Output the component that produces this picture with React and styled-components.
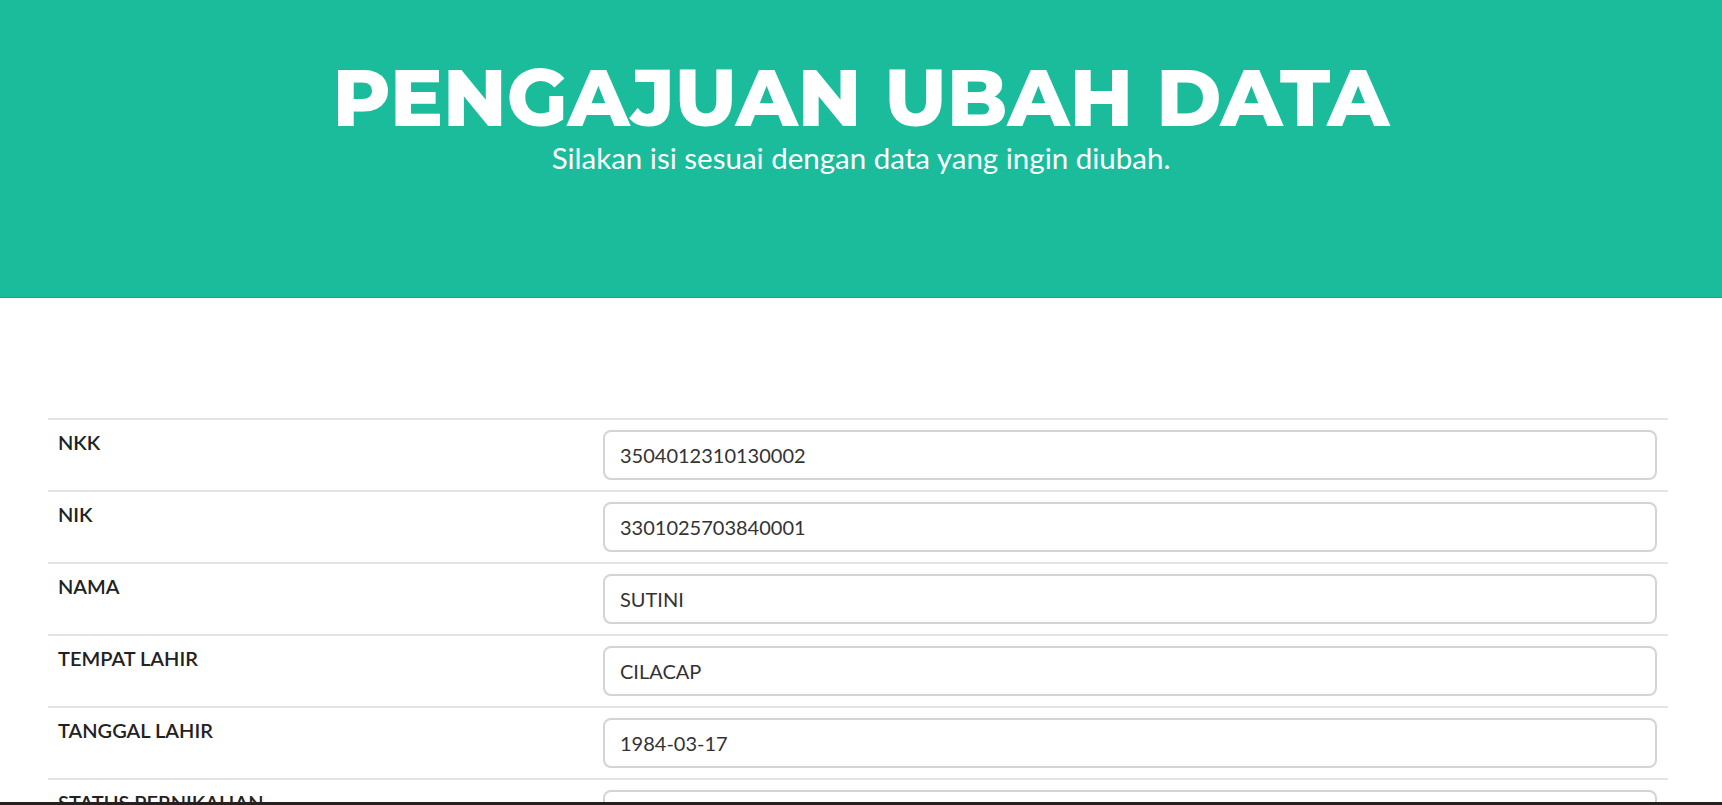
import React, { useState } from 'react';
import styled, { createGlobalStyle } from 'styled-components';

const GlobalStyle = createGlobalStyle`
  html, body {
    margin: 0;
    padding: 0;
    background: #fff;
    font-family: Lato, "Open Sans", sans-serif;
    color: #222;
  }
  * {
    box-sizing: border-box;
  }
`;

const Header = styled.header`
  background: #1abc9c;
  height: 298px;
  padding-top: 58px;
  text-align: center;
  color: #fff;
  border-bottom: 1px solid #18a98c;
`;

const Title = styled.h1`
  margin: 0;
  font-family: Montserrat, Inter, "Open Sans", sans-serif;
  font-weight: 800;
  font-size: 79px;
  line-height: 81px;
  text-transform: uppercase;
`;

const Subtitle = styled.p`
  margin: 0;
  font-family: Lato, sans-serif;
  font-size: 29.5px;
  line-height: 1.3;
`;

const Section = styled.section`
  padding: 120px 54px 0 48px;
`;

const Table = styled.div`
  display: flex;
  flex-direction: column;
`;

const Row = styled.div`
  display: grid;
  grid-template-columns: 545px 1fr;
  border-top: 2px solid #e4e4e6;
`;

const Cell = styled.div`
  padding: 9px 11px 10px 10px;
`;

const Label = styled.label`
  display: block;
  font-weight: 600;
  font-size: 20px;
  line-height: 1.35;
  color: #222;
`;

const Input = styled.input`
  display: block;
  width: 100%;
  height: 50px;
  padding: 0 15px;
  margin-top: 1px;
  border: 2px solid #d3d3d8;
  border-radius: 8px;
  background: #fff;
  font-family: Lato, sans-serif;
  font-size: 20px;
  color: #333;
  outline: none;
`;

const BottomBar = styled.div`
  position: fixed;
  left: 0;
  right: 0;
  bottom: 0;
  height: 3px;
  background: #2a1f1f;
`;

const fields = [
  { name: 'nkk', label: 'NKK', value: '3504012310130002' },
  { name: 'nik', label: 'NIK', value: '3301025703840001' },
  { name: 'nama', label: 'NAMA', value: 'SUTINI' },
  { name: 'tempat_lahir', label: 'TEMPAT LAHIR', value: 'CILACAP' },
  { name: 'tanggal_lahir', label: 'TANGGAL LAHIR', value: '1984-03-17' },
  { name: 'status', label: 'STATUS PERNIKAHAN', value: 'KAWIN' },
  { name: 'alamat', label: 'ALAMAT', value: '' },
];

const App = () => {
  const [formData, setFormData] = useState(
    Object.fromEntries(fields.map((f) => [f.name, f.value]))
  );

  const handleChange = (e) => {
    setFormData({ ...formData, [e.target.name]: e.target.value });
  };

  return (
    <>
      <GlobalStyle />
      <Header>
        <Title>Pengajuan Ubah Data</Title>
        <Subtitle>Silakan isi sesuai dengan data yang ingin diubah.</Subtitle>
      </Header>
      <Section>
        <Table>
          {fields.map((f) => (
            <Row key={f.name}>
              <Cell>
                <Label htmlFor={f.name}>{f.label}</Label>
              </Cell>
              <Cell>
                <Input
                  id={f.name}
                  name={f.name}
                  value={formData[f.name]}
                  onChange={handleChange}
                />
              </Cell>
            </Row>
          ))}
        </Table>
      </Section>
      <BottomBar />
    </>
  );
};

export default App;
